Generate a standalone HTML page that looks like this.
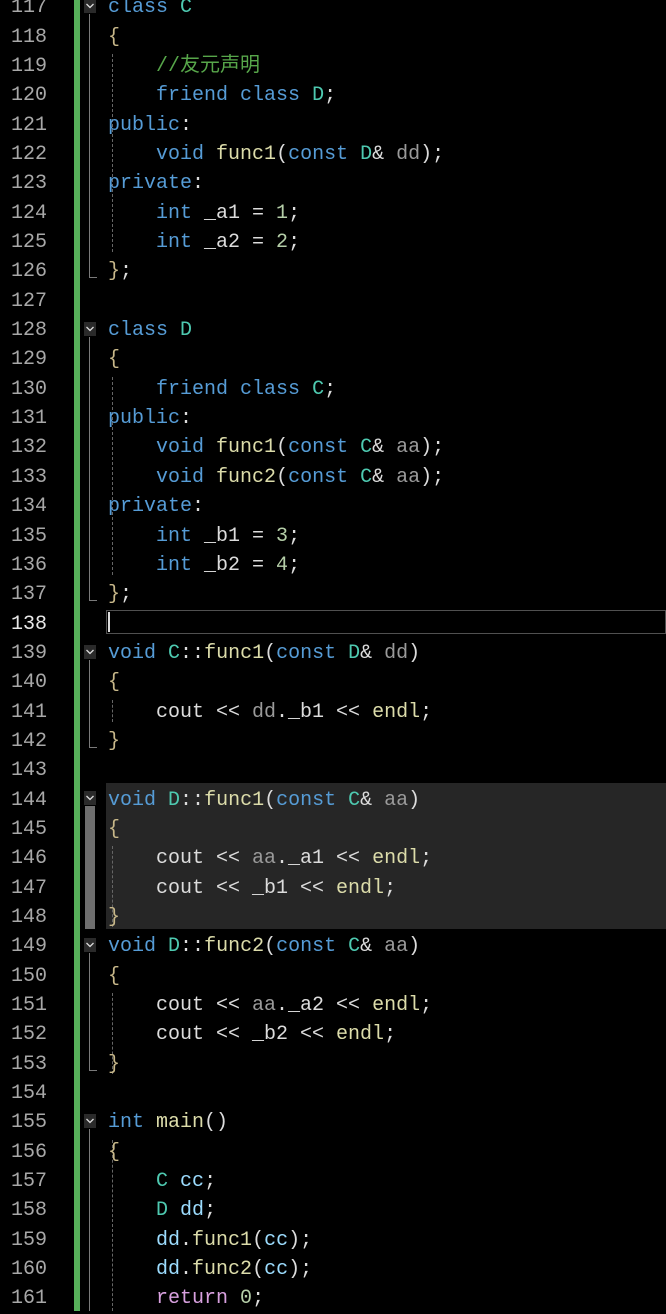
<!DOCTYPE html>
<html><head><meta charset="utf-8"><style>
body{margin:0;background:#000;width:666px;height:1311px;overflow:hidden;position:relative;font-family:"Liberation Mono","Noto Sans CJK SC",monospace;font-size:20px}
pre{margin:0;font:inherit;line-height:29.35px;position:absolute;top:-6.7px}
.ln{left:0;width:47px;text-align:right;color:#a8a8a8}
.cd{left:108px;color:#dcdcdc}
.k{color:#569cd6}.t{color:#4ec9b0}.f{color:#dcdcaa}.c{color:#57a64a}.p{color:#9a9a9a}.v{color:#9cdcfe}.n{color:#b5cea8}.r{color:#d8a0df}.b{color:#c8b88a}
.fb{position:absolute;left:84px;width:12px;height:14px;background:#2a2a2a}
.fb svg{position:absolute;left:0;top:0}
.fl{position:absolute;left:89px;width:1px;background:#7a7a7a}
.ft{position:absolute;left:89px;width:8px;height:1px;background:#7a7a7a}
.ig{position:absolute;left:112px;width:0;border-left:1px dashed #666}
</style></head><body>
<div style="position:absolute;left:74px;top:0;width:6px;height:1311px;background:#57b05a"></div>
<div style="position:absolute;left:106px;top:783px;width:560px;height:146px;background:#262626"></div>
<div style="position:absolute;left:85px;top:806px;width:10px;height:123px;background:#6e6e6e"></div>
<div style="position:absolute;left:106px;top:610px;width:558px;height:22px;border:1px solid #505050"></div>
<div style="position:absolute;left:108px;top:612px;width:2px;height:20px;background:#ddd"></div>

<div class="fb" style="top:-1px"><svg width="12" height="14"><path d="M2.5 5 L6 8.5 L9.5 5" stroke="#ddd" stroke-width="1.3" fill="none"/></svg></div>
<div class="fb" style="top:322px"><svg width="12" height="14"><path d="M2.5 5 L6 8.5 L9.5 5" stroke="#ddd" stroke-width="1.3" fill="none"/></svg></div>
<div class="fb" style="top:645px"><svg width="12" height="14"><path d="M2.5 5 L6 8.5 L9.5 5" stroke="#ddd" stroke-width="1.3" fill="none"/></svg></div>
<div class="fb" style="top:791px"><svg width="12" height="14"><path d="M2.5 5 L6 8.5 L9.5 5" stroke="#ddd" stroke-width="1.3" fill="none"/></svg></div>
<div class="fb" style="top:938px"><svg width="12" height="14"><path d="M2.5 5 L6 8.5 L9.5 5" stroke="#ddd" stroke-width="1.3" fill="none"/></svg></div>
<div class="fb" style="top:1114px"><svg width="12" height="14"><path d="M2.5 5 L6 8.5 L9.5 5" stroke="#ddd" stroke-width="1.3" fill="none"/></svg></div>

<div class="fl" style="top:14px;height:263px"></div><div class="ft" style="top:277px"></div>
<div class="fl" style="top:337px;height:263px"></div><div class="ft" style="top:600px"></div>
<div class="fl" style="top:660px;height:87px"></div><div class="ft" style="top:747px"></div>
<div class="fl" style="top:953px;height:117px"></div><div class="ft" style="top:1070px"></div>
<div class="fl" style="top:1129px;height:182px"></div>

<div class="ig" style="top:54px;height:198px"></div>
<div class="ig" style="top:377px;height:198px"></div>
<div class="ig" style="top:700px;height:22px"></div>
<div class="ig" style="top:846px;height:81px"></div>
<div class="ig" style="top:993px;height:81px"></div>
<div class="ig" style="top:1140px;height:171px"></div>

<pre class="ln">117
118
119
120
121
122
123
124
125
126
127
128
129
130
131
132
133
134
135
136
137
<span style="color:#e8e8e8">138</span>
139
140
141
142
143
144
145
146
147
148
149
150
151
152
153
154
155
156
157
158
159
160
161</pre>
<pre class="cd"><span class="k">class</span> <span class="t">C</span>
<span class="b">{</span>
    <span class="c">//友元声明</span>
    <span class="k">friend class</span> <span class="t">D</span>;
<span class="k">public</span>:
    <span class="k">void</span> <span class="f">func1</span>(<span class="k">const</span> <span class="t">D</span>&amp; <span class="p">dd</span>);
<span class="k">private</span>:
    <span class="k">int</span> _a1 = <span class="n">1</span>;
    <span class="k">int</span> _a2 = <span class="n">2</span>;
<span class="b">}</span>;

<span class="k">class</span> <span class="t">D</span>
<span class="b">{</span>
    <span class="k">friend class</span> <span class="t">C</span>;
<span class="k">public</span>:
    <span class="k">void</span> <span class="f">func1</span>(<span class="k">const</span> <span class="t">C</span>&amp; <span class="p">aa</span>);
    <span class="k">void</span> <span class="f">func2</span>(<span class="k">const</span> <span class="t">C</span>&amp; <span class="p">aa</span>);
<span class="k">private</span>:
    <span class="k">int</span> _b1 = <span class="n">3</span>;
    <span class="k">int</span> _b2 = <span class="n">4</span>;
<span class="b">}</span>;

<span class="k">void</span> <span class="t">C</span>::<span class="f">func1</span>(<span class="k">const</span> <span class="t">D</span>&amp; <span class="p">dd</span>)
<span class="b">{</span>
    cout &lt;&lt; <span class="p">dd</span>._b1 &lt;&lt; <span class="f">endl</span>;
<span class="b">}</span>

<span class="k">void</span> <span class="t">D</span>::<span class="f">func1</span>(<span class="k">const</span> <span class="t">C</span>&amp; <span class="p">aa</span>)
<span class="b">{</span>
    cout &lt;&lt; <span class="p">aa</span>._a1 &lt;&lt; <span class="f">endl</span>;
    cout &lt;&lt; _b1 &lt;&lt; <span class="f">endl</span>;
<span class="b">}</span>
<span class="k">void</span> <span class="t">D</span>::<span class="f">func2</span>(<span class="k">const</span> <span class="t">C</span>&amp; <span class="p">aa</span>)
<span class="b">{</span>
    cout &lt;&lt; <span class="p">aa</span>._a2 &lt;&lt; <span class="f">endl</span>;
    cout &lt;&lt; _b2 &lt;&lt; <span class="f">endl</span>;
<span class="b">}</span>

<span class="k">int</span> <span class="f">main</span>()
<span class="b">{</span>
    <span class="t">C</span> <span class="v">cc</span>;
    <span class="t">D</span> <span class="v">dd</span>;
    <span class="v">dd</span>.<span class="f">func1</span>(<span class="v">cc</span>);
    <span class="v">dd</span>.<span class="f">func2</span>(<span class="v">cc</span>);
    <span class="r">return</span> <span class="n">0</span>;</pre>
</body></html>
